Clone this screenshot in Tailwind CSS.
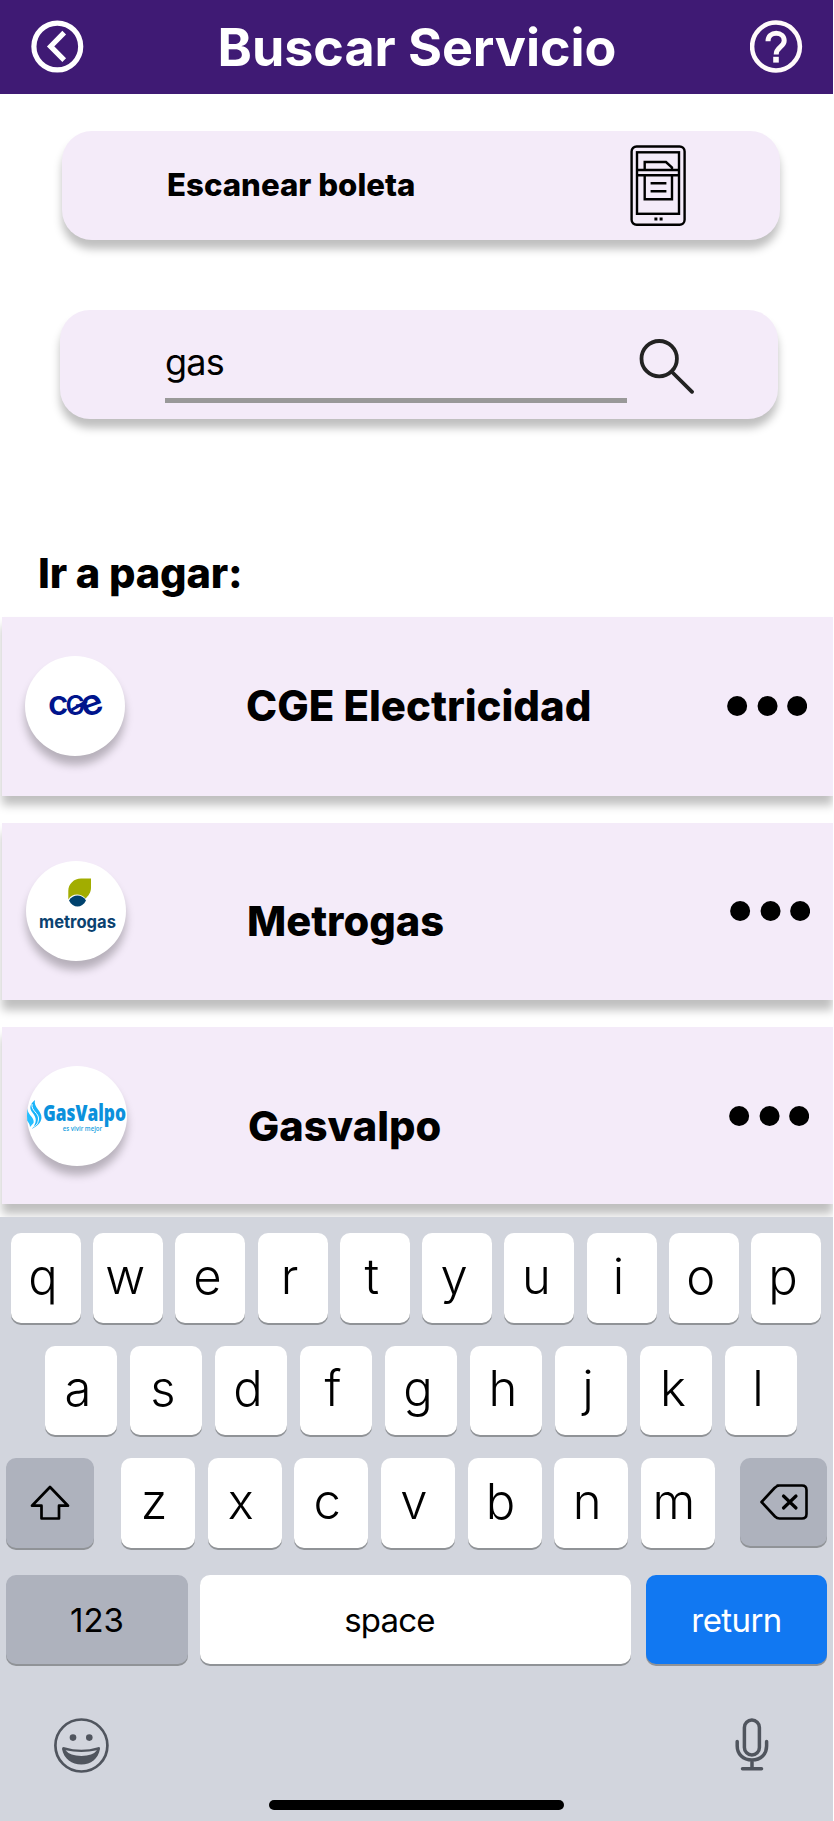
<!DOCTYPE html>
<html lang="es">
<head>
<meta charset="utf-8">
<title>Buscar Servicio</title>
<script src="https://cdn.jsdelivr.net/npm/@tailwindcss/browser@4"></script>
</head>
<body class="bg-white">
<div class="flex h-[1821px] w-[833px] flex-col overflow-hidden bg-white font-['Inter',sans-serif] text-black">

  <header class="flex h-[94px] shrink-0 items-center justify-between bg-[#3f1a74] pr-[30px] pb-[1px] pl-[31px]">
    <svg class="size-[53px]" viewBox="0 0 53 53" fill="none" stroke="#fff" stroke-width="5.2"><circle cx="26.3" cy="26.5" r="23.4"/><path d="M33.2 12.6 19.6 26.4 33.2 40.2"/></svg>
    <h1 class="pt-[3px] text-[52px] leading-[62px] font-bold tracking-[-0.05px] whitespace-nowrap">
      <span class="text-white">Buscar Servicio</span>
    </h1>
    <svg class="size-[53px]" viewBox="0 0 53 53" fill="none" stroke="#fffafa" stroke-width="4.5"><circle cx="26" cy="26.5" r="23.9"/><path stroke-width="5" d="M18 21.2C18 16 21.600 13.2 26.2 13.2S34.2 16.4 34.2 20.8C34.2 27 26.2 27 26.2 34.4"/><path stroke-width="5.6" d="M26 36.8V42.6"/></svg>
  </header>

  <main class="flex h-[1123px] shrink-0 flex-col">
    <button class="mt-[37px] ml-[62px] flex h-[109px] w-[718px] shrink-0 items-center justify-between rounded-[30px] bg-[#f4ebf9] pr-[94px] pl-[105px] shadow-[0_9px_9px_rgba(0,0,0,0.25)]">
      <span class="pb-[2px] text-[31.2px] leading-[38px] font-extrabold whitespace-nowrap">Escanear boleta</span>
      <svg class="h-[81px] w-[56px]" viewBox="0 0 56 81" fill="none" stroke="#000" stroke-width="2.4"><rect x="1.6" y="1.5" width="53" height="78.3" rx="5"/><rect x="7" y="7.3" width="42" height="61.5"/><path d="M14.7 24V17H36L42 22.6V24M7 25H49M7 30.2H49M14.7 30V54.2H42V30M20.6 38.2H36.4M20.6 46.2H36.4"/><path stroke-width="3" d="M24.4 73.9H27.4M29.6 73.9H32.6"/></svg>
    </button>

    <div class="mt-[70px] ml-[60px] flex h-[109px] w-[718px] shrink-0 justify-between rounded-[30px] bg-[#f4ebf9] pr-[84px] pl-[105px] shadow-[0_9px_9px_rgba(0,0,0,0.25)]">
      <div class="mt-[30px] h-[63px] w-[462px] border-b-[5px] border-[#999] text-[36px] leading-[44px] tracking-[-0.8px]">gas</div>
      <svg class="mt-[29px] size-[55px]" viewBox="0 0 55 55" fill="none" stroke="#222" stroke-width="3.8" stroke-linecap="round"><circle cx="20.2" cy="19.7" r="17.7"/><path d="M33.5 33.5 53 52.8"/></svg>
    </div>

    <h2 class="mt-[129px] ml-[38px] h-[50px] shrink-0 text-[41.6px] leading-[50px] font-extrabold tracking-[-0.2px] whitespace-nowrap">Ir a pagar:</h2>

    <section class="mt-[19px] ml-[2px] flex w-[831px] shrink-0 flex-col gap-[27px]">
      <div class="flex h-[179px] items-center bg-[#f4ebf9] pb-[1px] pl-[23px] shadow-[0_9px_9px_rgba(0,0,0,0.25)]">
        <div class="size-[100px] shrink-0 rounded-full bg-white shadow-[0_9px_9px_rgba(0,0,0,0.25)]">
          <svg class="size-[100px]" viewBox="0 0 100 100" fill="#00148c" font-family="Inter, sans-serif" font-weight="600">
            <text x="23" y="58.600" font-size="35" textLength="20.500" lengthAdjust="spacingAndGlyphs">c</text>
            <text x="40.500" y="58.600" font-size="26.500" textLength="19.500" lengthAdjust="spacingAndGlyphs">G</text>
            <text x="56" y="58.600" font-size="35" textLength="22" lengthAdjust="spacingAndGlyphs" transform="rotate(-20 66.500 49.500)">e</text>
            <path d="M46.500 54 62 45" stroke="#00148c" stroke-width="3"/>
          </svg>
        </div>
        <h3 class="ml-[121px] w-[481px] text-[41.9px] leading-[50px] font-extrabold whitespace-nowrap">CGE Electricidad</h3>
        <svg class="h-[20px] w-[80px]" viewBox="0 0 79.7 20"><circle cx="10" cy="10" r="10"/><circle cx="40.4" cy="10" r="10"/><circle cx="70" cy="10" r="10"/></svg>
      </div>
      <div class="flex h-[177px] items-center bg-[#f4ebf9] pb-[1px] pl-[24px] shadow-[0_10px_9px_rgba(0,0,0,0.25)]">
        <div class="size-[100px] shrink-0 rounded-full bg-white shadow-[0_9px_9px_rgba(0,0,0,0.25)]">
          <svg class="size-[100px]" viewBox="0 0 100 100">
            <path fill="#a2ad00" d="M65 17.500V27C65 31 62.500 35 59.500 37.500C55 32 46 32 42.300 38.500V30C42.300 23 48 17.500 55 17.500Z"/>
            <path fill="#00426e" d="M43 39.500C47 32.800 56 32.800 60 39.500C56 47.500 47 47.500 43 39.500Z"/>
            <text x="13" y="67" fill="#0b4270" font-family="Inter, sans-serif" font-weight="700" font-size="17.500" textLength="77" lengthAdjust="spacingAndGlyphs">metrogas</text>
          </svg>
        </div>
        <h3 class="mt-[20px] ml-[121px] w-[483px] text-[41.6px] leading-[50px] font-extrabold whitespace-nowrap">Metrogas</h3>
        <svg class="h-[20px] w-[80px]" viewBox="0 0 79.7 20"><circle cx="10" cy="10" r="10"/><circle cx="40.4" cy="10" r="10"/><circle cx="70" cy="10" r="10"/></svg>
      </div>
      <div class="flex h-[177px] items-center bg-[#f4ebf9] pl-[25px] shadow-[0_10px_9px_rgba(0,0,0,0.25)]">
        <div class="size-[100px] shrink-0 rounded-full bg-white shadow-[0_9px_9px_rgba(0,0,0,0.25)]">
          <svg class="size-[100px]" viewBox="0 0 100 100">
            <clipPath id="disc"><circle cx="50" cy="50" r="50"/></clipPath>
            <g clip-path="url(#disc)"><path fill="#18b4fa" d="M8 34C6 41 15 45 14.500 52C14 57 10 60 5 63C10 56 10 52 5 46C2 42 3 38 8 34Z"/><path fill="#23beff" d="M1 42C-1 48 8 51 6.500 57L3 61C3 55-4 54-2 48Z"/><path stroke="#fff" fill="none" d="M5 38C4 45 12 47 11.500 53S8 60 6 61"/></g>
            <text x="16" y="55" fill="#0b91dc" font-family="Open Sans, sans-serif" font-weight="800" font-size="23.500" textLength="83" lengthAdjust="spacingAndGlyphs">GasValpo</text>
            <text x="35.700" y="65" fill="#199fe0" font-family="Open Sans, sans-serif" font-weight="600" font-size="7.500" textLength="39.500" lengthAdjust="spacingAndGlyphs">es vivir mejor</text>
          </svg>
        </div>
        <h3 class="mt-[20px] ml-[121px] w-[481px] text-[41.6px] leading-[50px] font-extrabold whitespace-nowrap">Gasvalpo</h3>
        <svg class="h-[20px] w-[80px]" viewBox="0 0 79.7 20"><circle cx="10" cy="10" r="10"/><circle cx="40.4" cy="10" r="10"/><circle cx="70" cy="10" r="10"/></svg>
      </div>
    </section>
  </main>

  <footer class="relative flex h-[604px] shrink-0 flex-col bg-[#d2d5dd] pt-[16px] *:shrink-0">
    <div class="flex h-[90px] justify-between pr-[12px] pl-[11px] text-[49px] leading-[82px] font-light *:w-[70px] *:rounded-[10px] *:bg-white *:pt-[3px] *:pr-[6px] *:text-center *:shadow-[0_2px_0_#909397]">
      <div>q</div><div>w</div><div>e</div><div>r</div><div>t</div><div>y</div><div>u</div><div>i</div><div>o</div><div>p</div>
    </div>
    <div class="mt-[23px] flex h-[89px] justify-between pr-[36px] pl-[45px] text-[49px] leading-[82px] font-light *:w-[72px] *:rounded-[10px] *:bg-white *:pt-[2px] *:pr-[6px] *:text-center *:shadow-[0_2px_0_#909397]">
      <div>a</div><div>s</div><div>d</div><div>f</div><div>g</div><div>h</div><div>j</div><div>k</div><div>l</div>
    </div>
    <div class="mt-[23px] flex h-[90px] pl-[6px]">
      <div class="flex w-[88px] items-center justify-center rounded-[10px] bg-[#aeb2bd] shadow-[0_2px_0_#909397]">
        <svg class="h-[36px] w-[40px]" viewBox="0 0 40 36" fill="none" stroke="#000" stroke-width="2.7" stroke-linejoin="round"><path d="M20 2 38 20.700H29V33.500H11.500V20.700H2Z"/></svg>
      </div>
      <div class="ml-[27px] flex w-[594px] justify-between text-[49px] leading-[82px] font-light *:w-[74px] *:rounded-[10px] *:bg-white *:pt-[3px] *:pr-[8px] *:text-center *:shadow-[0_2px_0_#909397]">
        <div>z</div><div>x</div><div>c</div><div>v</div><div>b</div><div>n</div><div>m</div>
      </div>
      <div class="ml-[25px] flex h-[88px] w-[87px] items-center justify-center rounded-[10px] bg-[#aeb2bd] shadow-[0_2px_0_#909397]">
        <svg class="h-[36px] w-[48px]" viewBox="0 0 48 36" fill="none" stroke="#000" stroke-width="2.6" stroke-linejoin="round" stroke-linecap="round"><path d="M17.500 1.500H42Q46.500 1.500 46.500 6V30Q46.500 34.500 42 34.500H19.500Q17 34.500 15 32.500L1.500 18 14.500 4Q17 1.500 19.500 1.500"/><path stroke-width="3.200" d="M23.500 12 36 24M36 12 23.500 24"/></svg>
      </div>
    </div>
    <div class="mt-[27px] flex h-[89px] pl-[6px] text-[33px] leading-[90px] *:rounded-[10px] *:text-center *:shadow-[0_2px_0_#909397]">
      <div class="w-[182px] bg-[#aeb2bd]">123</div>
      <div class="ml-[12px] w-[431px] bg-white pr-[52px] tracking-[-0.8px]">space</div>
      <div class="ml-[15px] w-[181px] bg-[#1178f2] tracking-[-0.6px] text-white">return</div>
    </div>
    <div class="mt-[54px] flex h-[55px] justify-between pr-[64px] pl-[54px]">
      <svg class="size-[55px]" viewBox="0 0 55 55" fill="#50555e"><circle cx="27.400" cy="27.500" r="26" fill="none" stroke="#50555e" stroke-width="2.700"/><circle cx="19" cy="19.600" r="3.300"/><circle cx="35.300" cy="19.600" r="3.300"/><path fill-rule="evenodd" d="M8 31Q8 28.600 10.500 29.200Q27.400 34.500 44 29.200Q46.500 28.600 46 31C44 41 37 46.500 27.400 46.500S10 41 8 31ZM11.500 32.300Q16 38 27.400 38T43 32.300Q27.400 35.700 11.500 32.300Z"/></svg>
      <svg class="h-[53px] w-[34px]" viewBox="0 0 34 53" fill="none" stroke="#50555e" stroke-width="3.500" stroke-linecap="round"><rect x="9.400" y="2" width="15" height="35" rx="7.500"/><path d="M2.200 23.500V28C2.200 36 8 42 17 42S31.600 36 31.600 28V23.500M17 42V50.500M7.500 50.700H26.500"/></svg>
    </div>
    <div class="mt-[27px] ml-[269px] h-[10px] w-[295px] rounded-full bg-black"></div>
  </footer>
</div>
</body>
</html>
